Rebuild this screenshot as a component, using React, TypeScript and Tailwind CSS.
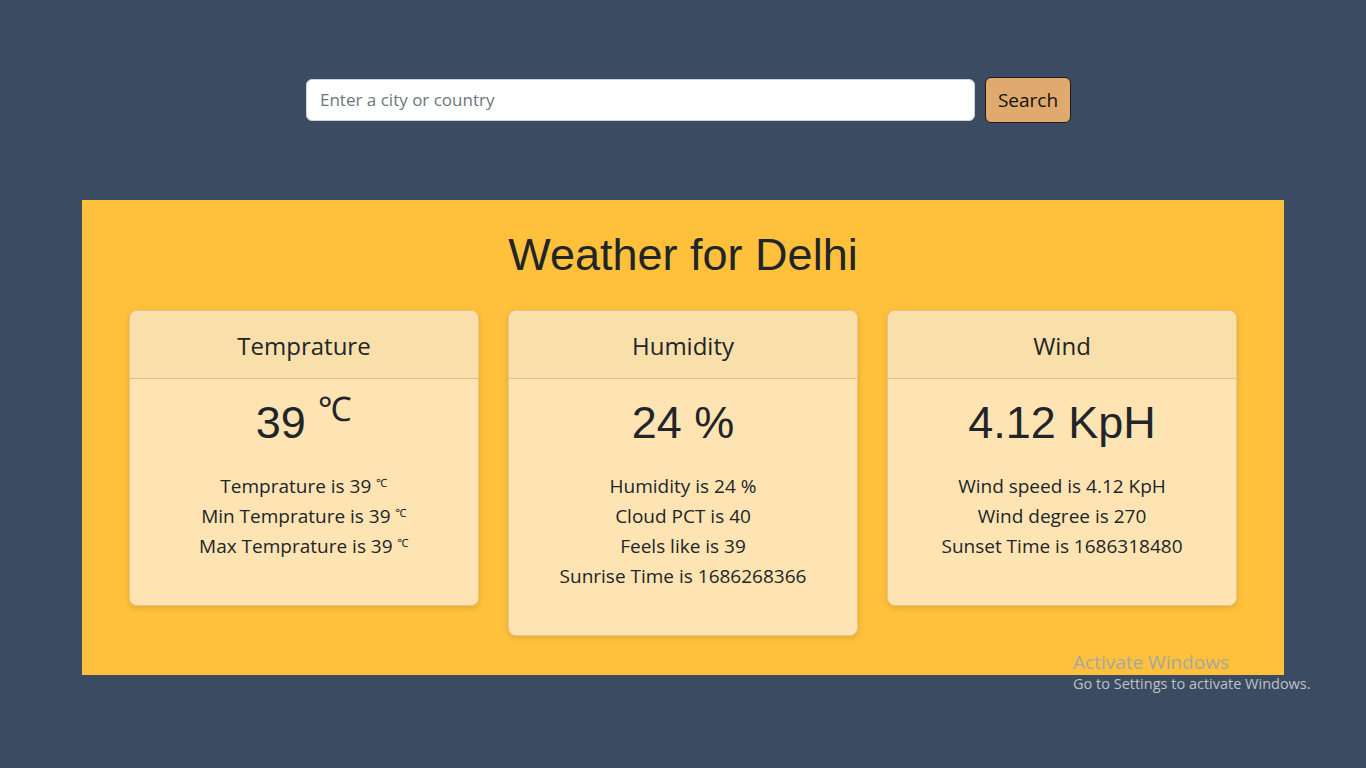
import React from "react";

const seg = { fontFamily: '"Open Sans", "Noto Sans", sans-serif' };
const arial = { fontFamily: '"Liberation Sans", Arial, sans-serif' };

function Deg({ big }: { big?: boolean }) {
  return (
    <sup
      className={
        big
          ? "relative top-[-0.5em] align-baseline text-[0.75em] leading-[0]"
          : "relative top-[-0.5em] align-baseline text-[0.6em] leading-[0]"
      }
    >
      ℃
    </sup>
  );
}

function Card({
  title,
  value,
  lines,
}: {
  title: string;
  value: React.ReactNode;
  lines: React.ReactNode[];
}) {
  return (
    <div className="rounded-[8px] border border-[#e6c48e] bg-[#ffe4b3] shadow-[0_2px_6px_rgba(0,0,0,0.12)] overflow-hidden">
      <div
        className="h-[68px] pt-[3px] flex items-center justify-center border-b border-[#e2bc8c] bg-[#f9dfa9] text-[24px] text-[#212529]"
        style={seg}
      >
        {title}
      </div>
      <div className="pt-[17px] pb-[44px] text-center text-[#212529]">
        <div className="text-[45px] leading-[54px]" style={arial}>
          {value}
        </div>
        <div className="mt-[21px] text-[19px] leading-[30px]" style={seg}>
          {lines.map((l, i) => (
            <div key={i}>{l}</div>
          ))}
        </div>
      </div>
    </div>
  );
}

export default function App() {
  return (
    <div className="relative min-h-[768px] w-full bg-[#3b4b61] overflow-hidden">
      <div className="flex items-center pt-[77px] pl-[306px] gap-[10px]">
        <div
          className="w-[669px] h-[42px] rounded-[6px] border border-[#ced4da] bg-white flex items-center px-[13px] text-[17px] text-[#6c757d]"
          style={seg}
        >
          Enter a city or country
        </div>
        <button
          className="w-[86px] h-[46px] rounded-[6px] border border-[#1a1a1a] bg-[#e0a96d] text-[19px] text-[#111]"
          style={seg}
        >
          Search
        </button>
      </div>

      <div className="mx-[82px] mt-[77px] h-[475px] bg-[#ffc13b] pt-[28px]">
        <h1
          className="text-center text-[45px] leading-[54px] text-[#212529]"
          style={arial}
        >
          Weather for Delhi
        </h1>
        <div className="mt-[28px] grid grid-cols-[350px_350px_350px] justify-center gap-[29px] items-start">
          <Card
            title="Temprature"
            value={
              <>
                39 <Deg big />
              </>
            }
            lines={[
              <>
                Temprature is 39 <Deg />
              </>,
              <>
                Min Temprature is 39 <Deg />
              </>,
              <>
                Max Temprature is 39 <Deg />
              </>,
            ]}
          />
          <Card
            title="Humidity"
            value="24 %"
            lines={[
              "Humidity is 24 %",
              "Cloud PCT is 40",
              "Feels like is 39",
              "Sunrise Time is 1686268366",
            ]}
          />
          <Card
            title="Wind"
            value="4.12 KpH"
            lines={[
              "Wind speed is 4.12 KpH",
              "Wind degree is 270",
              "Sunset Time is 1686318480",
            ]}
          />
        </div>
      </div>

      <div className="absolute left-[1073px] top-[650px]" style={seg}>
        <div className="text-[19px] leading-[24px] text-[#a8a7a3]">Activate Windows</div>
        <div className="text-[14.5px] leading-[20px] text-[#bfc2c7]">
          Go to Settings to activate Windows.
        </div>
      </div>
    </div>
  );
}
